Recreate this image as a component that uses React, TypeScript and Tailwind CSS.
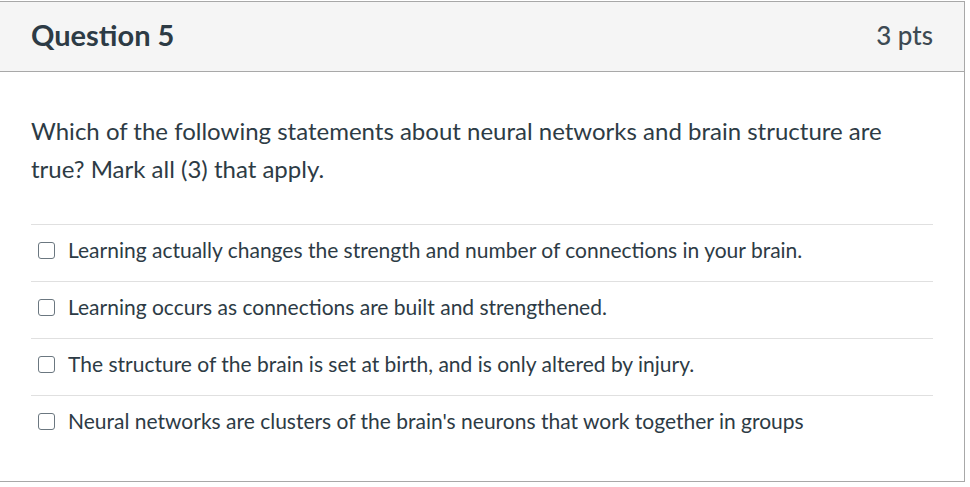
// quiz_question.tsx
import React from "react";

const answers = [
  "Learning actually changes the strength and number of connections in your brain.",
  "Learning occurs as connections are built and strengthened.",
  "The structure of the brain is set at birth, and is only altered by injury.",
  "Neural networks are clusters of the brain's neurons that work together in groups",
];

export default function App() {
  return (
    <div className="min-h-screen bg-white pt-px font-['Lato',sans-serif] text-[#2d3b45]">
      <div className="-ml-px w-[966px] border border-[#a8a8a8]">
        <header className="flex h-[70px] items-center justify-between border-b border-[#a8a8a8] bg-[#f5f5f5] px-[31px] pb-[3px]">
          <h2 className="text-[29px] font-bold">Question 5</h2>
          <span className="text-[26px] font-medium text-[#3d4a53]">3 pts</span>
        </header>

        <div className="h-[409px] px-[31px] pt-[40px]">
          <p className="text-[24px] leading-[38px]">
            Which of the following statements about neural networks and brain structure are
            true? Mark all (3) that apply.
          </p>

          <div className="mt-[36px]">
            {answers.map((a) => (
              <label
                key={a}
                className="flex h-[57px] items-center gap-[13px] border-t border-[#e0e0e0] pl-[7px] pb-[6px]"
              >
                <span className="h-[17px] w-[17px] shrink-0 rounded-[3px] border-[1.5px] border-[#6b7780] bg-white" />
                <span className="text-[21px]">{a}</span>
              </label>
            ))}
          </div>
        </div>
      </div>
    </div>
  );
}
